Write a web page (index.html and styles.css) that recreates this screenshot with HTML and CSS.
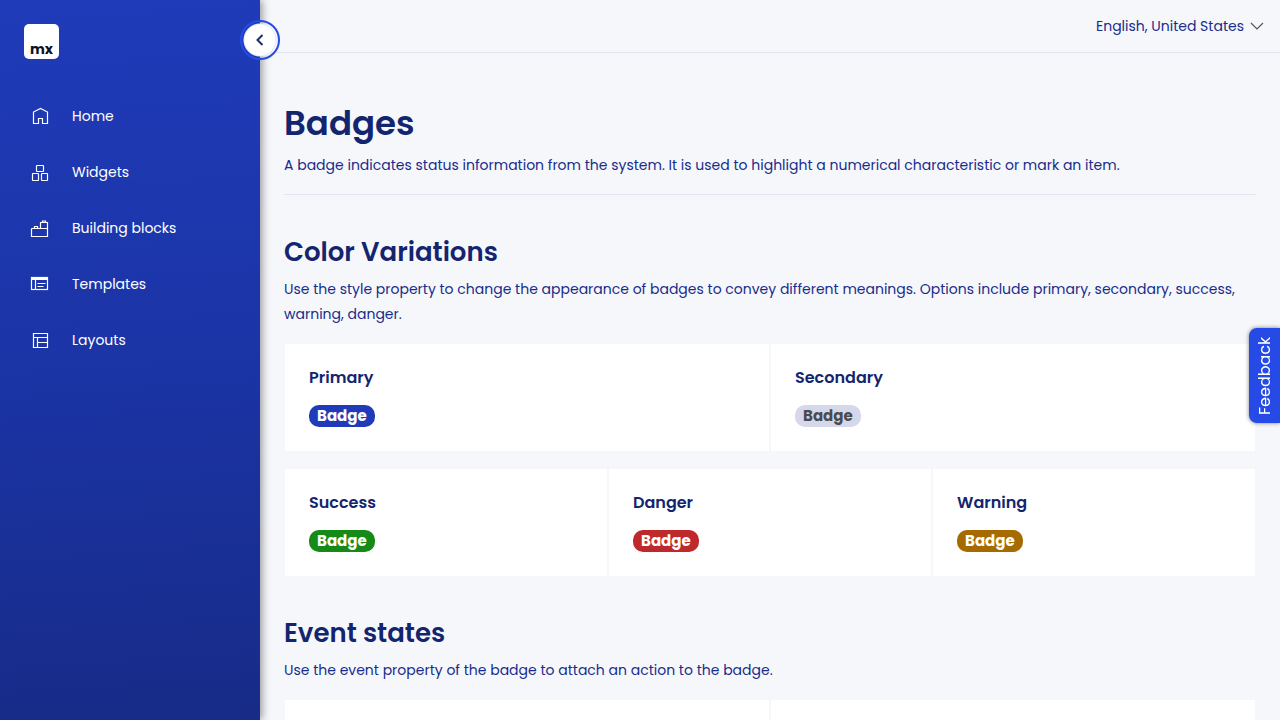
FILE: index.html
```html
<!DOCTYPE html>
<html lang="en-US">
<head>
<meta charset="utf-8">
<meta name="viewport" content="width=device-width, initial-scale=1">
<title>Badges</title>
<link rel="stylesheet" href="styles.css">
</head>
<body>
<div class="shell">
  <aside class="sidebar">
    <div class="logo"><span class="logo-text">mx</span></div>
    <nav class="nav" aria-label="Main">
      <a class="nav-link" href="#home">
        <svg class="nav-icon" viewBox="0 0 20 20" aria-hidden="true"><path d="M3.500 17.500V6L10.500 2.500L17.500 6V17.500H12.500V12.500H8.500V17.500Z"/></svg>
        Home</a>
      <a class="nav-link" href="#widgets">
        <svg class="nav-icon" viewBox="0 0 20 20" aria-hidden="true"><rect x="6.500" y="3.500" width="7" height="6" rx=".5"/><rect x="2.500" y="11.500" width="6" height="7" rx=".5"/><rect x="11.500" y="11.500" width="6" height="7" rx=".5"/></svg>
        Widgets</a>
      <a class="nav-link" href="#building-blocks">
        <svg class="nav-icon" viewBox="0 0 20 20" aria-hidden="true"><path d="M1.500 10.500V18.500H17.500V4.500H10.500V10.500M1.500 10.500H17.500M4.500 10.500V8.500H7.500V10.500M12.500 4.500V3H15.500V4.500"/></svg>
        Building blocks</a>
      <a class="nav-link" href="#templates">
        <svg class="nav-icon" viewBox="0 0 20 20" aria-hidden="true"><rect x="1.500" y="3.500" width="16" height="12"/><path d="M1 4.500H18" stroke-width="3"/><path d="M5.500 4V15.500M7.500 9.500H15.500M7.500 12.500H13.500"/></svg>
        Templates</a>
      <a class="nav-link" href="#layouts">
        <svg class="nav-icon" viewBox="0 0 20 20" aria-hidden="true"><path d="M3.500 3.500H17.500V17.500H3.500ZM3.500 7.500H17.500M7.500 7.500V17.500M7.500 12.500H17.500"/></svg>
        Layouts</a>
    </nav>
    <button class="toggle" type="button" aria-label="Collapse sidebar">
      <svg class="toggle-icon" viewBox="0 0 16 16" aria-hidden="true"><path d="M10.500 3L5.500 8L10.500 13"/></svg>
    </button>
  </aside>
  <div class="page">
    <header class="topbar">
      <label class="language">
        <select class="language-select" aria-label="Language"><option>English, United States</option></select>
        <svg class="language-icon" viewBox="0 0 14 14" aria-hidden="true"><path d="M1 4L7 10L13 4"/></svg>
      </label>
    </header>
    <main class="content">
      <div class="page-head">
        <h1 class="title">Badges</h1>
        <p class="text">A badge indicates status information from the system. It is used to highlight a numerical characteristic or mark an item.</p>
      </div>
      <section class="section">
        <h2 class="heading">Color Variations</h2>
        <p class="text">Use the style property to change the appearance of badges to convey different meanings. Options include primary, secondary, success, warning, danger.</p>
        <div class="cards">
          <div class="card"><h3 class="card-title">Primary</h3><span class="badge badge-primary">Badge</span></div>
          <div class="card"><h3 class="card-title">Secondary</h3><span class="badge badge-secondary">Badge</span></div>
        </div>
        <div class="cards">
          <div class="card"><h3 class="card-title">Success</h3><span class="badge badge-success">Badge</span></div>
          <div class="card"><h3 class="card-title">Danger</h3><span class="badge badge-danger">Badge</span></div>
          <div class="card"><h3 class="card-title">Warning</h3><span class="badge badge-warning">Badge</span></div>
        </div>
      </section>
      <section class="section">
        <h2 class="heading">Event states</h2>
        <p class="text">Use the event property of the badge to attach an action to the badge.</p>
        <div class="cards">
          <div class="card"></div>
          <div class="card"></div>
        </div>
      </section>
    </main>
  </div>
  <button class="feedback" type="button">Feedback</button>
</div>
</body>
</html>
```
FILE: styles.css
```css
* { box-sizing: border-box; }

body {
  margin: 0;
  background: #f6f7fb;
  color: #182c8c;
  font: 14px/25px Poppins, Inter, "Liberation Sans", sans-serif;
}

h1, h2, h3, p { margin: 0; }

button, select { font: inherit; color: inherit; }

.shell {
  display: flex;
  height: 100vh;
}

.sidebar {
  position: relative;
  z-index: 1;
  flex: 0 0 260px;
  padding: 24px 0;
  background: linear-gradient(176deg, #1f3bb9, #1b34a6 50%, #172b87);
  box-shadow: 2px 0 8px rgba(0, 0, 0, .4);
}

.logo {
  display: flex;
  align-items: flex-end;
  justify-content: center;
  width: 35px;
  height: 35px;
  margin-left: 24px;
  padding-bottom: 2px;
  border-radius: 5px;
  background: #fff;
}

.logo-text {
  color: #0a1325;
  font-size: 14px;
  font-weight: 700;
  line-height: 16px;
}

.nav {
  display: flex;
  flex-direction: column;
  margin-top: 29px;
}

.nav-link {
  display: flex;
  align-items: center;
  gap: 22px;
  height: 56px;
  padding-left: 30px;
  color: #fff;
  text-decoration: none;
}

.nav-icon {
  width: 20px;
  height: 20px;
  fill: none;
  stroke: #fff;
  stroke-width: 1.2;
}

.toggle {
  position: absolute;
  top: 20px;
  right: -20px;
  display: flex;
  align-items: center;
  justify-content: center;
  width: 40px;
  height: 40px;
  padding: 0;
  border: 2px solid #264ae5;
  border-radius: 50%;
  background: radial-gradient(circle, #fff 15px, #e6e8f5 16px, transparent 17px);
}

.toggle-icon {
  width: 16px;
  height: 16px;
  fill: none;
  stroke: #182c70;
  stroke-width: 2;
}

.page {
  flex: 1;
  min-width: 0;
  overflow-y: auto;
  scrollbar-width: none;
}

.topbar {
  display: flex;
  align-items: center;
  justify-content: flex-end;
  height: 53px;
  padding: 0 16px;
  border-bottom: 1px solid #e2e4f2;
}

.language {
  display: flex;
  align-items: center;
  gap: 6px;
}

.language-select {
  padding: 0;
  border: 0;
  background: none;
  appearance: none;
}

.language-icon {
  width: 14px;
  height: 14px;
  fill: none;
  stroke: #555;
  stroke-width: 1.2;
}

.content { padding: 48px 24px; }

.page-head {
  padding-bottom: 16px;
  border-bottom: 1px solid #e2e4f2;
}

.title {
  margin-bottom: 8px;
  color: #14256f;
  font-size: 34px;
  font-weight: 600;
  line-height: 44px;
}

.section { margin-top: 40px; }

.heading {
  margin-bottom: 8px;
  color: #14256f;
  font-size: 26px;
  font-weight: 600;
  line-height: 34px;
}

.cards {
  display: flex;
  gap: 2px;
  margin: 17px 1px 0;
}

.cards + .cards { margin-top: 18px; }

.card {
  flex: 1;
  min-height: 107px;
  padding: 24px;
  background: #fff;
}

.card-title {
  margin-bottom: 17px;
  color: #14256f;
  font-size: 16px;
  font-weight: 600;
  line-height: 20px;
}

.badge {
  display: block;
  width: fit-content;
  padding: 0 8px;
  border-radius: 10px;
  color: #fff;
  font-size: 15px;
  font-weight: 700;
  line-height: 22px;
}

.badge-primary { background: #1f3bb9; }
.badge-secondary { background: #d5d8ea; color: #4a4a4f; }
.badge-success { background: #168a16; }
.badge-danger { background: #be292c; }
.badge-warning { background: #a56a00; }

.feedback {
  position: fixed;
  top: 328px;
  right: 0;
  z-index: 2;
  width: 31px;
  height: 95px;
  padding: 0;
  border: 0;
  border-radius: 0 8px 8px 0;
  background: #264ae5;
  box-shadow: 0 0 4px rgba(0, 0, 0, .5);
  color: #fff;
  font-size: 16px;
  writing-mode: vertical-rl;
  transform: rotate(180deg);
}
```
